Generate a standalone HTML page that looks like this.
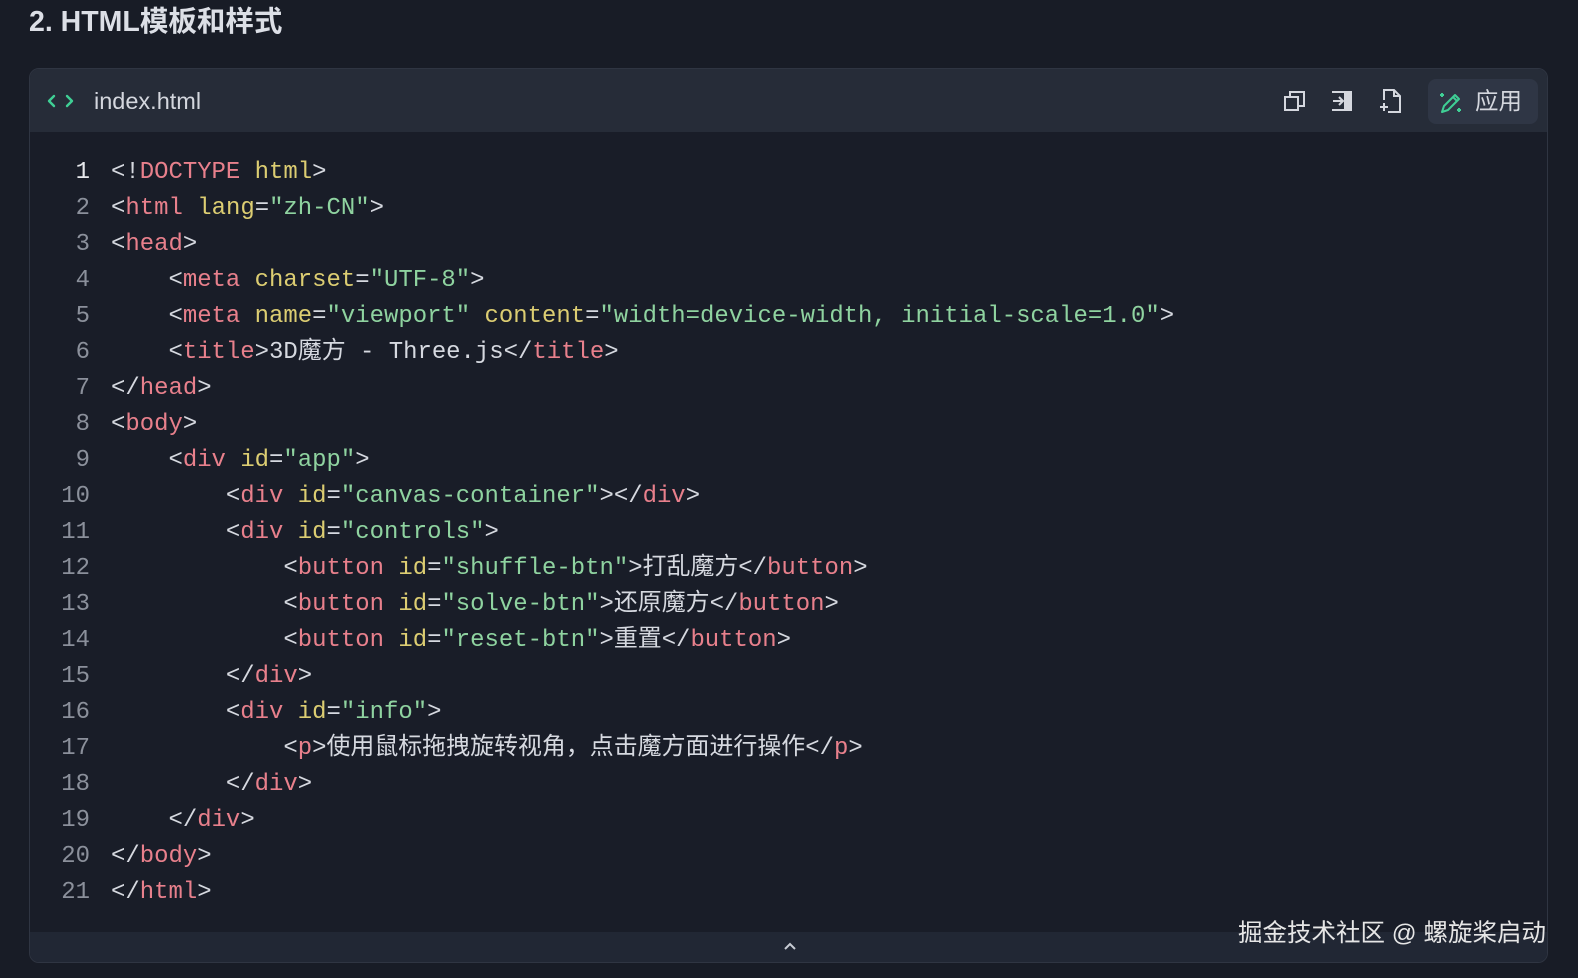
<!DOCTYPE html>
<html><head><meta charset="utf-8"><style>
body{margin:0;width:1578px;height:978px;background:#181c26;overflow:hidden;font-family:"Liberation Sans","Noto Sans CJK SC",sans-serif;position:relative}
h2{position:absolute;left:29px;top:2px;margin:0;font-size:28.5px;font-weight:bold;color:#dcdfe6;line-height:40px}
.card{position:absolute;left:29px;top:68px;width:1517px;height:893px;border:1px solid #2f3542;border-radius:10px;background:#191d28;overflow:hidden}
.hd{height:63px;background:#262c38;position:relative}
.fn{position:absolute;left:64px;top:0;line-height:64px;font-size:23.5px;color:#d4d7de}
.code{position:absolute;left:0;top:86px;font-family:"Liberation Mono","Noto Sans CJK SC",monospace;font-size:23.95px;line-height:36px;color:#d6d9e0;white-space:pre}
.ln{display:inline-block;width:60px;text-align:right;color:#8b909b;margin-right:21px}
.t{color:#e8808c}.a{color:#dccd72}.s{color:#8fd3a0}
.ft{position:absolute;left:0;bottom:0;width:100%;height:30px;background:#212734}
.btn{position:absolute;right:9px;top:10px;width:110px;height:45px;background:#2f3645;border-radius:8px}
.wm{position:absolute;left:1238px;top:914px;font-size:24.5px;color:#e6e6e6}
</style></head><body>
<h2>2. HTML模板和样式</h2>
<div class="card">
<div class="hd">
<svg style="position:absolute;left:16px;top:23px" width="30" height="18" viewBox="0 0 30 18" fill="none" stroke="#3fcf95" stroke-width="2.4" stroke-linecap="round" stroke-linejoin="round"><path d="M8 4 3 9l5 5M21 4l5 5-5 5"/></svg>
<span class="fn">index.html</span>
<svg style="position:absolute;left:1253px;top:20px" width="24" height="24" viewBox="0 0 24 24" fill="none" stroke="#d4d7de" stroke-width="2"><rect x="2" y="8" width="13" height="13"/><path d="M7 8V3h14v14h-6"/></svg>
<svg style="position:absolute;left:1300px;top:20px" width="24" height="24" viewBox="0 0 24 24" fill="none" stroke="#d4d7de" stroke-width="2"><path d="M2 3h13v18H2"/><path d="M15 3h6v18h-6z" fill="#d4d7de"/><path d="M3 12h9M9 8l4 4-4 4"/></svg>
<svg style="position:absolute;left:1348px;top:19px" width="26" height="26" viewBox="0 0 26 26" fill="none" stroke="#d4d7de" stroke-width="2"><path d="M6 12V2h10l6 6v16H10"/><path d="M16 2v6h6M2 19h8M6 15v8"/></svg>
<div class="btn">
<svg style="position:absolute;left:10px;top:11px" width="26" height="26" viewBox="0 0 26 26" fill="none" stroke="#3fcf95" stroke-width="2" stroke-linejoin="round"><path d="M4 22l2-6L17 5l4 4-11 11z"/><path d="M15 7l4 4M4 3v4M2 5h4M21 18v4M19 20h4"/></svg>
<span style="position:absolute;left:47px;top:0;line-height:45px;font-size:23.5px;color:#d4d7de">应用</span>
</div>
</div>
<div class="code"><span class="ln" style="color:#e6e8ec">1</span>&lt;!<span class="t">DOCTYPE</span> <span class="a">html</span>&gt;
<span class="ln">2</span>&lt;<span class="t">html</span> <span class="a">lang</span>=<span class="s">"zh-CN"</span>&gt;
<span class="ln">3</span>&lt;<span class="t">head</span>&gt;
<span class="ln">4</span>    &lt;<span class="t">meta</span> <span class="a">charset</span>=<span class="s">"UTF-8"</span>&gt;
<span class="ln">5</span>    &lt;<span class="t">meta</span> <span class="a">name</span>=<span class="s">"viewport"</span> <span class="a">content</span>=<span class="s">"width=device-width, initial-scale=1.0"</span>&gt;
<span class="ln">6</span>    &lt;<span class="t">title</span>&gt;3D魔方 - Three.js&lt;/<span class="t">title</span>&gt;
<span class="ln">7</span>&lt;/<span class="t">head</span>&gt;
<span class="ln">8</span>&lt;<span class="t">body</span>&gt;
<span class="ln">9</span>    &lt;<span class="t">div</span> <span class="a">id</span>=<span class="s">"app"</span>&gt;
<span class="ln">10</span>        &lt;<span class="t">div</span> <span class="a">id</span>=<span class="s">"canvas-container"</span>&gt;&lt;/<span class="t">div</span>&gt;
<span class="ln">11</span>        &lt;<span class="t">div</span> <span class="a">id</span>=<span class="s">"controls"</span>&gt;
<span class="ln">12</span>            &lt;<span class="t">button</span> <span class="a">id</span>=<span class="s">"shuffle-btn"</span>&gt;打乱魔方&lt;/<span class="t">button</span>&gt;
<span class="ln">13</span>            &lt;<span class="t">button</span> <span class="a">id</span>=<span class="s">"solve-btn"</span>&gt;还原魔方&lt;/<span class="t">button</span>&gt;
<span class="ln">14</span>            &lt;<span class="t">button</span> <span class="a">id</span>=<span class="s">"reset-btn"</span>&gt;重置&lt;/<span class="t">button</span>&gt;
<span class="ln">15</span>        &lt;/<span class="t">div</span>&gt;
<span class="ln">16</span>        &lt;<span class="t">div</span> <span class="a">id</span>=<span class="s">"info"</span>&gt;
<span class="ln">17</span>            &lt;<span class="t">p</span>&gt;使用鼠标拖拽旋转视角，点击魔方面进行操作&lt;/<span class="t">p</span>&gt;
<span class="ln">18</span>        &lt;/<span class="t">div</span>&gt;
<span class="ln">19</span>    &lt;/<span class="t">div</span>&gt;
<span class="ln">20</span>&lt;/<span class="t">body</span>&gt;
<span class="ln">21</span>&lt;/<span class="t">html</span>&gt;</div>
<div class="ft"><svg style="position:absolute;left:753px;top:9px" width="14" height="10" viewBox="0 0 14 10" fill="none" stroke="#c8ccd4" stroke-width="2"><path d="M2 8l5-5 5 5"/></svg></div>
</div>
<div class="wm">掘金技术社区 @ 螺旋桨启动</div>
</body></html>
